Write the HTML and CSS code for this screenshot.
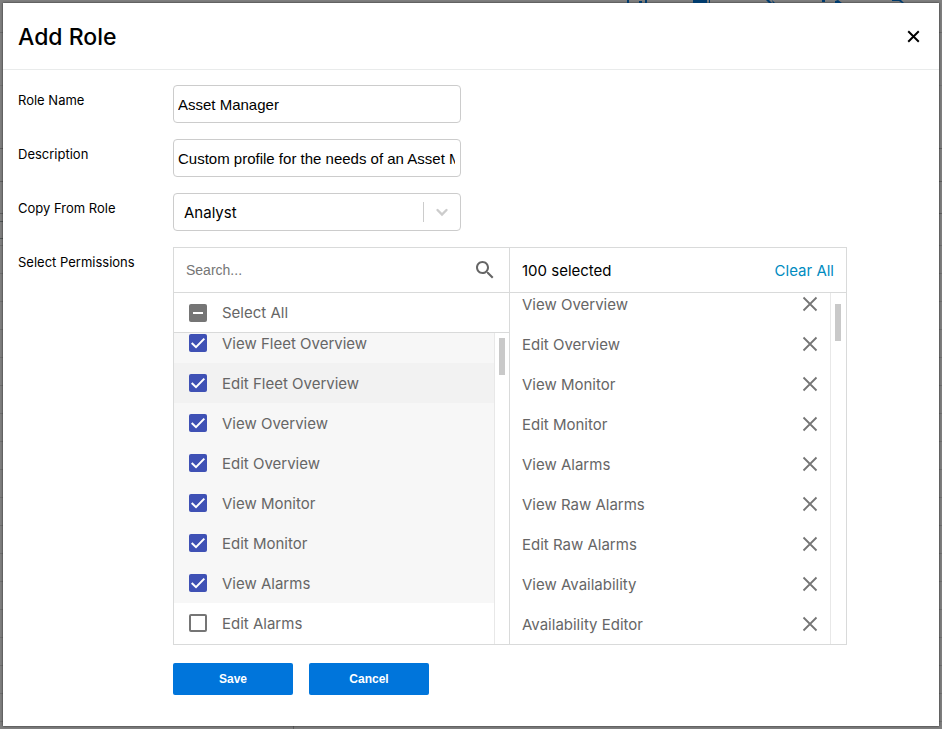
FILE: index.html
```html
<!DOCTYPE html>
<html lang="en">
<head>
    <meta charset="UTF-8">
    <meta name="viewport" content="width=device-width, initial-scale=1.0">
    <title>Add Role</title>
    <link rel="stylesheet" href="styles.css">
</head>
<body>

<svg class="symbols" aria-hidden="true">
    <symbol id="cross" viewBox="0 0 16 16">
        <path d="M1.5 1.5l13 13M14.5 1.5l-13 13" fill="none" stroke="currentColor"/>
    </symbol>
</svg>

<div class="toolbar" aria-hidden="true">
    <svg width="290" height="3" viewBox="0 0 290 3">
        <path d="M0 0h2v3H0zM18 0h2v3h-2zM12 1h3v2h-3zM66 0h14v3H66zM82 0h1v3h-1zM139 0h3l3 3h-3zM145 0l3 3h-2zM195 0h3v2h-3zM208 1l3-1 4 3h-7zM265 0h9l3 3h-2l-3-2h-7z" fill="#003b6d"/>
    </svg>
</div>

<div class="modal" role="dialog" aria-labelledby="modalTitle">
    <header class="modal-header">
        <h1 id="modalTitle">Add Role</h1>
        <button type="button" class="close-btn" aria-label="Close"><svg width="13" height="13"><use href="#cross"/></svg></button>
    </header>

    <form id="roleForm" class="role-form">
        <label for="roleName">Role Name</label>
        <input type="text" id="roleName" class="text-input" name="roleName" value="Asset Manager">

        <label for="description">Description</label>
        <input type="text" id="description" class="text-input" name="description" value="Custom profile for the needs of an Asset Manager">

        <label for="copyFrom">Copy From Role</label>
        <div class="select-wrap">
            <select id="copyFrom" name="copyFrom">
                <option>Analyst</option>
            </select>
            <span class="select-arrow">
                <svg width="20" height="20" viewBox="0 0 20 20"><path d="M5.5 8l4.5 4.5L14.5 8" fill="none" stroke="currentColor" stroke-width="2.4" stroke-linecap="round"/></svg>
            </span>
        </div>

        <label for="search">Select Permissions</label>
        <div class="transfer">
            <div class="panel">
                <div class="panel-top">
                    <input type="search" id="search" class="search" placeholder="Search...">
                    <svg class="search-icon" width="24" height="24" viewBox="0 0 24 24"><path fill="currentColor" d="M15.5 14h-.79l-.28-.27C15.41 12.59 16 11.11 16 9.5 16 5.91 13.09 3 9.5 3S3 5.91 3 9.5 5.91 16 9.5 16c1.61 0 3.09-.59 4.23-1.57l.27.28v.79l5 4.99L20.49 19l-4.99-5zm-6 0C7.01 14 5 11.99 5 9.5S7.01 5 9.5 5 14 7.01 14 9.5 11.99 14 9.5 14z"/></svg>
                </div>
                <label class="item select-all"><input type="checkbox" id="selectAll">Select All</label>
                <div class="list-area">
                    <div class="list available">
                        <label class="item"><input type="checkbox" checked>View Fleet Overview</label>
                        <label class="item active"><input type="checkbox" checked>Edit Fleet Overview</label>
                        <label class="item"><input type="checkbox" checked>View Overview</label>
                        <label class="item"><input type="checkbox" checked>Edit Overview</label>
                        <label class="item"><input type="checkbox" checked>View Monitor</label>
                        <label class="item"><input type="checkbox" checked>Edit Monitor</label>
                        <label class="item"><input type="checkbox" checked>View Alarms</label>
                        <label class="item"><input type="checkbox">Edit Alarms</label>
                    </div>
                    <div class="track"><div class="thumb"></div></div>
                </div>
            </div>

            <div class="panel">
                <div class="panel-top">
                    <span>100 selected</span>
                    <button type="button" class="clear-btn">Clear All</button>
                </div>
                <div class="list-area">
                    <ul class="list chosen">
                        <li>View Overview <button type="button" aria-label="Remove View Overview"><svg width="16" height="16"><use href="#cross"/></svg></button></li>
                        <li>Edit Overview <button type="button" aria-label="Remove Edit Overview"><svg width="16" height="16"><use href="#cross"/></svg></button></li>
                        <li>View Monitor <button type="button" aria-label="Remove View Monitor"><svg width="16" height="16"><use href="#cross"/></svg></button></li>
                        <li>Edit Monitor <button type="button" aria-label="Remove Edit Monitor"><svg width="16" height="16"><use href="#cross"/></svg></button></li>
                        <li>View Alarms <button type="button" aria-label="Remove View Alarms"><svg width="16" height="16"><use href="#cross"/></svg></button></li>
                        <li>View Raw Alarms <button type="button" aria-label="Remove View Raw Alarms"><svg width="16" height="16"><use href="#cross"/></svg></button></li>
                        <li>Edit Raw Alarms <button type="button" aria-label="Remove Edit Raw Alarms"><svg width="16" height="16"><use href="#cross"/></svg></button></li>
                        <li>View Availability <button type="button" aria-label="Remove View Availability"><svg width="16" height="16"><use href="#cross"/></svg></button></li>
                        <li>Availability Editor <button type="button" aria-label="Remove Availability Editor"><svg width="16" height="16"><use href="#cross"/></svg></button></li>
                    </ul>
                    <div class="track"><div class="thumb"></div></div>
                </div>
            </div>
        </div>

        <div class="actions">
            <button type="submit">Save</button>
            <button type="button">Cancel</button>
        </div>
    </form>
</div>

<script>
    // "Select All" is partial while only some permissions are ticked
    const selectAll = document.getElementById('selectAll');
    const boxes = Array.from(document.querySelectorAll('.available input'));

    function updateSelectAll() {
        const count = boxes.filter(box => box.checked).length;
        selectAll.checked = count === boxes.length;
        selectAll.indeterminate = count > 0 && count < boxes.length;
    }

    boxes.forEach(box => box.addEventListener('change', updateSelectAll));
    selectAll.addEventListener('change', function () {
        boxes.forEach(box => box.checked = selectAll.checked);
    });
    updateSelectAll();

    document.getElementById('roleForm').addEventListener('submit', function (event) {
        event.preventDefault();
    });
</script>

</body>
</html>
```
FILE: styles.css
```css
* {
    box-sizing: border-box;
}
body {
    font-family: Inter, sans-serif;
    font-size: 15px;
    color: #000;
    margin: 0;
    min-height: 100vh;
    padding: 3px;
    display: flex;
    /* header lines of the page behind, then its table rows */
    background:
        linear-gradient(#6b6b6b, #6b6b6b) 0 32px / 100% 1px no-repeat,
        linear-gradient(#747474, #747474) 0 85px / 100% 1px no-repeat,
        linear-gradient(#5f5f5f, #5f5f5f) 0 148px / 100% 1px no-repeat,
        linear-gradient(#5f5f5f, #5f5f5f) 0 181px / 100% 1px no-repeat,
        linear-gradient(#5f5f5f, #5f5f5f) 0 213px / 100% 1px no-repeat,
        linear-gradient(#4f5555, #4f5555) 0 221px / 3px 1px no-repeat,
        linear-gradient(#4f5555, #4f5555) 0 238px / 3px 1px no-repeat,
        linear-gradient(#5f5f5f, #5f5f5f) 293px 100% / 1px 3px no-repeat,
        linear-gradient(#7f7f7f, #7f7f7f) 0 0 / 100% 240px no-repeat,
        repeating-linear-gradient(#7f7f7f 0 21px, #6f6f6f 21px 22px, #7f7f7f 22px 28px);
}
button {
    font: inherit;
    color: inherit;
    background: none;
    border: 0;
    padding: 0;
    cursor: pointer;
}
svg {
    display: block;
    stroke-width: 1.8;
}
.symbols {
    position: absolute;
    width: 0;
    height: 0;
}
.toolbar {
    position: absolute;
    top: 0;
    right: 25px;
}
.modal {
    flex: 1;
    background-color: #fff;
    box-shadow: 0 0 2px rgba(0, 0, 0, 0.7);
}
.modal-header {
    display: flex;
    align-items: center;
    justify-content: space-between;
    height: 67px;
    padding: 0 19px 0 15px;
    border-bottom: 1px solid #e9ebeb;
}
.modal-header h1 {
    font-size: 23px;
    font-weight: 500;
    margin: 0;
    padding-top: 2px;
}
.close-btn svg {
    stroke-width: 2.4;
}
.role-form {
    display: grid;
    grid-template-columns: 139px minmax(0, 674px);
    gap: 16px;
    padding: 15px;
}
.role-form > label {
    font-size: 13px;
    line-height: 16px;
    padding-top: 7px;
}
.text-input, .select-wrap {
    width: 288px;
    height: 38px;
    border: 1px solid #ccc;
    border-radius: 4px;
    background-color: #fff;
}
.text-input {
    font: 15px "Liberation Sans", Arial, sans-serif;
    padding: 0 5px 0 4px;
}
.select-wrap {
    position: relative;
}
.select-wrap select {
    appearance: none;
    font: inherit;
    color: #000;
    width: 100%;
    height: 100%;
    padding: 0 44px 0 10px;
    border: 0;
    background: none;
}
.select-arrow {
    position: absolute;
    top: 8px;
    right: 0;
    padding: 0 8px;
    border-left: 1px solid #ccc;
    color: #ccc;
    pointer-events: none;
}
.transfer {
    display: grid;
    grid-template-columns: 1fr 1fr;
    height: 398px;
    border: 1px solid #d9dada;
}
.panel {
    display: flex;
    flex-direction: column;
    min-width: 0;
    min-height: 0;
}
.panel:first-child {
    border-right: 1px solid #d9dada;
}
.panel-top {
    display: flex;
    align-items: center;
    justify-content: space-between;
    height: 45px;
    padding: 0 12px;
    border-bottom: 1px solid #d9dada;
}
.search {
    flex: 1;
    min-width: 0;
    font: 14px "Liberation Sans", Arial, sans-serif;
    padding: 0;
    border: 0;
    outline: 0;
}
.search::placeholder {
    color: #757575;
}
.search-icon {
    color: #666;
}
.clear-btn {
    color: #008bbf;
}
.list-area {
    display: flex;
    flex: 1;
    min-height: 0;
}
.list {
    display: flex;
    flex-direction: column;
    justify-content: flex-end;
    flex: 1;
    margin: 0;
    padding: 0;
    overflow: hidden;
    list-style: none;
    color: #666;
}
.item, .chosen li {
    display: flex;
    align-items: center;
    flex-shrink: 0;
    height: 40px;
}
.item {
    gap: 15px;
    padding-left: 15px;
    color: #666;
}
.select-all {
    border-bottom: 1px solid #d9dada;
}
.item input {
    appearance: none;
    width: 18px;
    height: 18px;
    margin: 0;
    border: 2px solid #757575;
    border-radius: 2px;
}
.item input:checked {
    border: 0;
    background: #3f51b5 url("data:image/svg+xml,%3Csvg xmlns='http://www.w3.org/2000/svg' viewBox='0 0 18 18'%3E%3Cpath d='M2.7 9l4.3 4.2 8.3-8.6' fill='none' stroke='white' stroke-width='2'/%3E%3C/svg%3E");
}
.item input:indeterminate {
    border: 0;
    background: linear-gradient(#fff, #fff) center / 10px 2px no-repeat #757575;
}
.item:has(input:checked) {
    background-color: #f7f7f7;
}
.available .active:has(input:checked) {
    background-color: #f2f2f2;
}
.available {
    padding-bottom: 1px;
}
.chosen li {
    justify-content: space-between;
    padding: 0 12px;
}
.chosen button {
    color: #757575;
}
.track {
    width: 15px;
    padding: 5px 4px;
    border-left: 1px solid #e8e8e8;
}
.chosen + .track {
    width: 16px;
    padding-top: 11px;
}
.thumb {
    width: 6px;
    height: 37px;
    background-color: #c9c9c9;
}
.actions {
    grid-column: 2;
    display: flex;
    gap: 16px;
    padding-top: 2px;
}
.actions button {
    width: 120px;
    height: 32px;
    border-radius: 2px;
    background-color: #0075db;
    color: #fff;
    font: bold 12px "Liberation Sans", Arial, sans-serif;
}
```
